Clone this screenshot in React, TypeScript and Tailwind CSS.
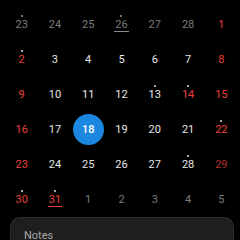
type Day = {
  n: number;
  tone: "dim" | "norm" | "red" | "redDim";
  dot?: boolean;
  underline?: boolean;
  selected?: boolean;
};

const rows: Day[][] = [
  [
    { n: 23, tone: "dim", dot: true },
    { n: 24, tone: "dim" },
    { n: 25, tone: "dim" },
    { n: 26, tone: "dim", dot: true, underline: true },
    { n: 27, tone: "dim" },
    { n: 28, tone: "dim" },
    { n: 1, tone: "red" },
  ],
  [
    { n: 2, tone: "red", dot: true },
    { n: 3, tone: "norm" },
    { n: 4, tone: "norm" },
    { n: 5, tone: "norm" },
    { n: 6, tone: "norm" },
    { n: 7, tone: "norm" },
    { n: 8, tone: "red" },
  ],
  [
    { n: 9, tone: "red" },
    { n: 10, tone: "norm" },
    { n: 11, tone: "norm" },
    { n: 12, tone: "norm" },
    { n: 13, tone: "norm", dot: true },
    { n: 14, tone: "red", dot: true },
    { n: 15, tone: "red" },
  ],
  [
    { n: 16, tone: "red" },
    { n: 17, tone: "norm" },
    { n: 18, tone: "norm", selected: true },
    { n: 19, tone: "norm" },
    { n: 20, tone: "norm" },
    { n: 21, tone: "norm" },
    { n: 22, tone: "red", dot: true },
  ],
  [
    { n: 23, tone: "red" },
    { n: 24, tone: "norm" },
    { n: 25, tone: "norm" },
    { n: 26, tone: "norm" },
    { n: 27, tone: "norm" },
    { n: 28, tone: "norm", dot: true },
    { n: 29, tone: "redDim" },
  ],
  [
    { n: 30, tone: "red", dot: true },
    { n: 31, tone: "red", dot: true, underline: true },
    { n: 1, tone: "dim" },
    { n: 2, tone: "dim" },
    { n: 3, tone: "dim" },
    { n: 4, tone: "dim" },
    { n: 5, tone: "dim" },
  ],
];

const toneClass = {
  dim: "text-[#7c7c7c]",
  norm: "text-[#e6e6e6]",
  red: "text-[#e8403a]",
  redDim: "text-[#b3302c]",
};

const dotClass = {
  dim: "bg-[#9a9a9a]",
  norm: "bg-[#e0e0e0]",
  red: "bg-[#e0e0e0]",
  redDim: "bg-[#e0e0e0]",
};

function Cell({ day }: { day: Day }) {
  return (
    <div className="relative flex h-[35px] items-center justify-center">
      {day.selected && (
        <div className="absolute h-[31px] w-[31px] rounded-full bg-[#1b87e0]" />
      )}
      {day.dot && (
        <div
          className={`absolute top-[8px] h-[2px] w-[2px] rounded-full ${dotClass[day.tone]}`}
        />
      )}
      <span
        className={`relative text-[11px] leading-[13px] ${
          day.selected ? "text-white font-medium" : toneClass[day.tone]
        } ${
          day.underline
            ? day.tone === "red"
              ? "border-b border-[#e8403a] px-px"
              : "border-b border-[#8a8a8a] px-px"
            : ""
        }`}
      >
        {day.n}
      </span>
    </div>
  );
}

export default function App() {
  return (
    <div
      className="flex h-[240px] w-[240px] flex-col overflow-hidden bg-black"
      style={{ fontFamily: "Roboto, 'Noto Sans', sans-serif" }}
    >
      <div className="flex flex-col pl-[5px] pr-[2px] pt-[7px]">
        {rows.map((row, i) => (
          <div key={i} className="grid grid-cols-7">
            {row.map((d, j) => (
              <Cell key={j} day={d} />
            ))}
          </div>
        ))}
      </div>
      <div className="ml-[10px] mr-[6px] flex-1 rounded-t-[10px] border border-b-0 border-[#2c2c2c] bg-[#1e1e1e] px-[13px] pt-[12px]">
        <div className="text-[11px] leading-none text-[#a8a8a8]">Notes</div>
      </div>
    </div>
  );
}
